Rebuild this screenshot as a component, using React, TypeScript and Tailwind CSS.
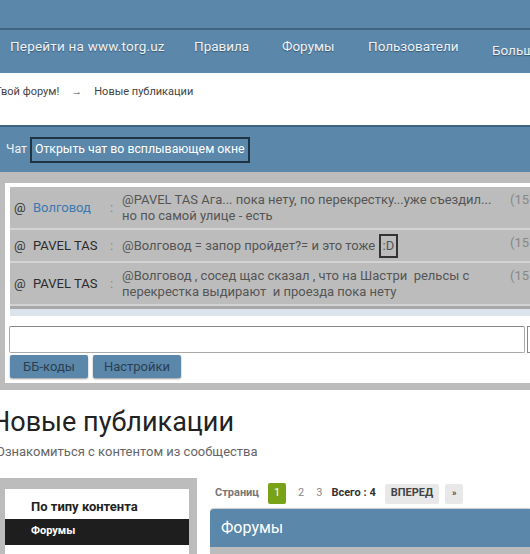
import React from "react";

const BLUE = "bg-[#5a87aa]";

interface Msg {
  name: string;
  color: string;
  lines: React.ReactNode;
  h: string;
}

const messages: Msg[] = [
  {
    name: "Волговод",
    color: "text-[#3b78b0]",
    lines: (
      <>
        @PAVEL TAS Ага... пока нету, по перекрестку...уже съездил...
        <br />
        но по самой улице - есть
      </>
    ),
    h: "h-[43px]",
  },
  {
    name: "PAVEL TAS",
    color: "text-[#2b2b2b]",
    lines: (
      <>
        @Волговод = запор пройдет?= и это тоже{" "}
        <span className="inline-block border-2 border-[#333] px-[2px] leading-[20px]">:D</span>
      </>
    ),
    h: "h-[33px]",
  },
  {
    name: "PAVEL TAS",
    color: "text-[#2b2b2b]",
    lines: (
      <>
        @Волговод , сосед щас сказал , что на Шастри&nbsp; рельсы с
        <br />
        перекрестка выдирают&nbsp; и проезда пока нету
      </>
    ),
    h: "h-[43px]",
  },
];

export default function App() {
  return (
    <div className="relative h-[554px] w-[530px] overflow-hidden bg-white font-['Roboto',sans-serif]">
      {/* Header */}
      <div className={`h-[28px] ${BLUE}`} />
      <div className="h-[2px] bg-[#3e6482]" />
      <nav className={`flex h-[43px] items-start whitespace-nowrap pl-[10px] pt-[6px] text-[13.5px] text-[#eef2f6] [text-shadow:0_1px_1px_rgba(0,0,0,0.35)] ${BLUE}`}>
        <span className="w-[184px] shrink-0 tracking-[0.2px]">Перейти на www.torg.uz</span>
        <span className="w-[88px] shrink-0">Правила</span>
        <span className="w-[86px] shrink-0">Форумы</span>
        <span className="w-[124px] shrink-0">Пользователи</span>
        <span className="mt-[4px] shrink-0">Больше</span>
      </nav>

      {/* Breadcrumb */}
      <div className="flex h-[52px] items-start whitespace-nowrap pt-[11px] text-[11px] text-[#444]">
        <span className="-ml-[5px]">Твой форум!</span>
        <span className="mx-[12px] text-[#555]">→</span>
        <span>Новые публикации</span>
      </div>

      {/* Chat bar */}
      <div className={`flex h-[47px] items-center border-t-2 border-[#3e6482] pl-[6px] text-[12.3px] text-[#eef2f6] ${BLUE}`}>
        <span className="mr-[3px]">Чат</span>
        <span className="flex h-[26px] items-center border-2 border-[#1e3344] px-[3px] text-white">
          Открыть чат во всплывающем окне
        </span>
      </div>

      {/* Chat box */}
      <div className="h-[218px] bg-[#bcbcbc] pl-[5px] pt-[11px]">
        <div className="h-[200px] bg-white pl-[5px] pt-[4px]">
          <div className="h-[122px] overflow-hidden bg-[#bcbcbc]">
            {messages.map((m, i) => (
              <div
                key={i}
                className={`flex ${m.h} items-center border-b-2 border-[#d3d3d3] text-[13px] leading-[16px]`}
              >
                <span className="w-[23px] pl-[4px] text-[#333]">@</span>
                <span className={`w-[77px] ${m.color}`}>{m.name}</span>
                <span className="w-[12px] text-[#888]">:</span>
                <span className="flex-1 whitespace-nowrap text-[#555]">{m.lines}</span>
                <span className="w-[20px] self-start pt-[5px] text-[#888]">(15</span>
              </div>
            ))}
            <div className="h-[6px] bg-[#a8a8a8]" />
          </div>
          <div className="h-[7px] bg-[#dbe4ec]" />
          <div className="flex pt-[10px]">
            <div className="ml-[-1px] h-[27px] w-[516px] shrink-0 rounded-[2px] border border-[#aaa] border-t-[#888] bg-white" />
            <div className="ml-[2px] h-[27px] w-[10px] shrink-0 border border-[#888] bg-white" />
          </div>
          <div className="mt-[2px] flex gap-[5px] text-[13px] text-[#2c3f50]">
            <button className={`h-[23px] w-[78px] rounded-[2px] shadow-[0_1px_2px_rgba(0,0,0,0.4)] ${BLUE}`}>
              ББ-коды
            </button>
            <button className={`h-[23px] w-[88px] rounded-[2px] shadow-[0_1px_2px_rgba(0,0,0,0.4)] ${BLUE}`}>
              Настройки
            </button>
          </div>
        </div>
      </div>

      {/* Title */}
      <div className="whitespace-nowrap pt-[15px]">
        <h1 className="-ml-[9px] text-[27px] leading-[34px] text-[#222]">Новые публикации</h1>
        <p className="-ml-[4px] mt-[3px] text-[13px] text-[#666]">Ознакомиться с контентом из сообщества</p>
      </div>

      {/* Lower content */}
      <div className="mt-[16px] flex">
        <div className="h-[90px] w-[197px] shrink-0 bg-[#bcbcbc] pl-[5px] pr-[8px] pt-[11px]">
          <div className="h-full bg-white">
            <div className="h-[30px] pl-[26px] pt-[8px] text-[13px] font-bold text-[#222]">По типу контента</div>
            <div className="flex h-[26px] items-center bg-[#1e1e1e] pl-[26px] text-[11px] font-bold text-white">
              Форумы
            </div>
            <div className="pl-[26px] pt-[6px] text-[11px] font-bold text-[#222]">Темы</div>
          </div>
        </div>
        <div className="ml-[13px] flex-1">
          <div className="flex h-[31px] items-center whitespace-nowrap pt-[1px] text-[11px] font-bold">
            <span className="mr-[9px] ml-[5px] text-[#777]">Страниц</span>
            <span className="flex h-[21px] w-[18px] items-center justify-center rounded-[2px] bg-[#78a317] font-normal text-white">1</span>
            <span className="ml-[12px] font-normal text-[#888]">2</span>
            <span className="ml-[12px] font-normal text-[#888]">3</span>
            <span className="ml-[9px] text-[#333]">Всего : 4</span>
            <span className="ml-[9px] flex h-[20px] items-center rounded-[2px] bg-[#e8e8e8] px-[6px] text-[#444]">ВПЕРЕД</span>
            <span className="ml-[6px] flex h-[20px] w-[18px] items-center justify-center rounded-[2px] bg-[#e8e8e8] text-[9px] text-[#444]">»</span>
          </div>
          <div className={`flex h-[38px] items-center rounded-tl-[4px] pl-[11px] text-[16px] text-white shadow-[0_-1px_1px_rgba(0,0,0,0.2)] ${BLUE}`}>
            Форумы
          </div>
          <div className="h-[10px] bg-[#bcbcbc]" />
        </div>
      </div>
    </div>
  );
}
